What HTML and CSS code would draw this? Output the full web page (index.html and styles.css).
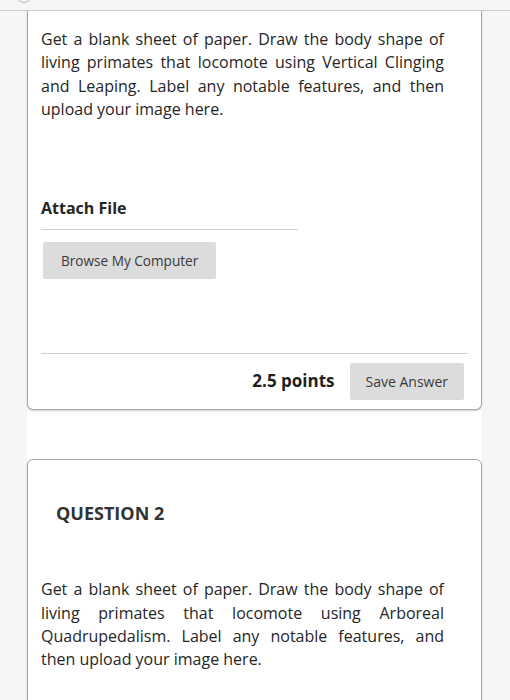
FILE: index.html
```html
<!DOCTYPE html>
<html lang="en">
<head>
  <meta charset="UTF-8">
  <meta name="viewport" content="width=device-width, initial-scale=1.0">
  <title>Test - Primate Locomotion</title>
  <link rel="stylesheet" href="styles.css">
</head>
<body>
  <div class="topbar">
    <span class="topbar-icon"></span>
  </div>

  <main class="column">
    <section class="question-card continued">
      <p class="question-text">Get a blank sheet of paper. Draw the body shape of living primates that locomote using Vertical Clinging and Leaping. Label any notable features, and then upload your image here.</p>

      <div class="attach">
        <h3 class="attach-title">Attach File</h3>
        <button class="btn btn-browse">Browse My Computer</button>
      </div>

      <div class="card-footer">
        <span class="points">2.5 points</span>
        <button class="btn">Save Answer</button>
      </div>
    </section>

    <section class="question-card">
      <h2 class="question-title">QUESTION 2</h2>
      <p class="question-text">Get a blank sheet of paper. Draw the body shape of living primates that locomote using Arboreal Quadrupedalism. Label any notable features, and then upload your image here.</p>
    </section>
  </main>
</body>
</html>
```

FILE: styles.css
```css
body {
  font-family: 'Open Sans', 'Liberation Sans', sans-serif;
  background-color: #f6f6f6;
  color: #262626;
  margin: 0;
  padding: 0;
}

.topbar {
  height: 10px;
  overflow: hidden;
  border-bottom: 1px solid #cfcfcf;
  background-color: #f6f6f6;
}

.topbar-icon {
  display: block;
  width: 14px;
  height: 14px;
  margin: -13px 0 0 16px;
  border: 1px solid #b5b5b5;
  border-radius: 50%;
}

.column {
  width: 455px;
  margin-left: 27px;
  background: white;
  padding-bottom: 40px;
}

.question-card {
  background: white;
  border: 1px solid #a8a8a8;
  border-radius: 6px;
  box-shadow: 0 1px 2px rgba(0,0,0,0.2);
  padding: 41px 13px 60px;
  margin-top: 49px;
}

.question-card.continued {
  border-top: none;
  border-radius: 0 0 6px 6px;
  padding: 17px 13px 9px;
  margin-top: 0;
}

.question-text {
  width: 403px;
  margin: 0;
  font-size: 16px;
  line-height: 23.3px;
  text-align: justify;
}

.question-title {
  margin: 0 0 53px 15px;
  font-size: 18px;
  line-height: 24px;
  font-weight: bold;
  color: #333;
}

.attach {
  margin-top: 76px;
}

.attach-title {
  width: 257px;
  margin: 0;
  padding-bottom: 9px;
  border-bottom: 1px solid #cfcfcf;
  font-size: 16px;
  line-height: 23.3px;
  font-weight: bold;
}

.btn {
  font-family: inherit;
  font-size: 14px;
  line-height: 19px;
  color: #3a3a3a;
  background-color: #dcdcdc;
  border: none;
  border-radius: 2px;
  padding: 9px 16px;
  cursor: pointer;
}

.btn-browse {
  display: block;
  margin: 12px 0 0 2px;
  padding: 9px 18px;
  font-size: 13.6px;
}

.card-footer {
  margin-top: 74px;
  padding: 9px 4px 0 0;
  border-top: 1px solid #cfcfcf;
  display: flex;
  justify-content: flex-end;
  align-items: center;
  gap: 15px;
}

.points {
  font-size: 17px;
  font-weight: bold;
  color: #1f1f1f;
  margin-top: -2px;
}
```
